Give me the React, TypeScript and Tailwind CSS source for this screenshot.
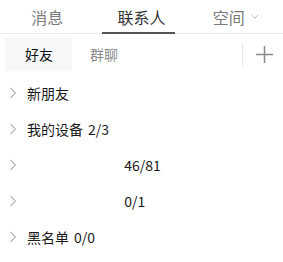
import React from 'react';

const ROWS = [
  { name: '新朋友', count: '' },
  { name: '我的设备', count: '2/3' },
  { name: '', count: '46/81' },
  { name: '', count: '0/1' },
  { name: '黑名单', count: '0/0' },
];

function Chevron({ className }: { className?: string }) {
  return (
    <svg viewBox="0 0 8 12" className={className} fill="none" stroke="currentColor" strokeWidth="1.1">
      <path d="M1.5 1l5 5-5 5" />
    </svg>
  );
}

export default function App() {
  return (
    <div
      className="w-[283px] h-[262px] bg-white overflow-hidden text-[#1a1a1a]"
      style={{ fontFamily: '"Noto Sans CJK SC", "Noto Sans", sans-serif' }}
    >
      {/* top tabs */}
      <div className="grid grid-cols-3 h-[34px] border-b border-[#ececec]">
        <div className="flex items-center justify-center text-[16px] text-[#7a7a7a]">消息</div>
        <div className="relative flex items-center justify-center text-[16px] text-[#333]">
          联系人
          <div className="absolute left-[8px] right-[14px] bottom-[-1px] h-[2px] bg-[#555]" />
        </div>
        <div className="flex items-center justify-center gap-[6px] text-[16px] text-[#7a7a7a]">
          空间
          <svg viewBox="0 0 10 6" className="w-[8px] h-[5px] text-[#aaa]" fill="none" stroke="currentColor" strokeWidth="1">
            <path d="M1 1l4 4 4-4" />
          </svg>
        </div>
      </div>

      {/* sub tabs */}
      <div className="flex items-center h-[37px] pt-[4px] pl-[5px] pr-[10px]">
        <div className="w-[67px] h-[33px] bg-[#f7f7f7] flex items-center pl-[20px] text-[14px] text-[#111]">好友</div>
        <div className="ml-[18px] text-[14px] text-[#8a8a8a]">群聊</div>
        <div className="ml-auto w-px h-[22px] bg-[#e6e6e6]" />
        <svg viewBox="0 0 16 16" className="ml-[13px] w-[17px] h-[17px] text-[#888]" fill="none" stroke="currentColor" strokeWidth="1.4">
          <path d="M8 0v16M0 8h16" />
        </svg>
      </div>

      {/* list */}
      <div className="flex flex-col pt-[4px]">
        {ROWS.map((row, i) => (
          <div key={i} className="flex items-center h-[36px] pl-[9px] text-[14px]">
            <Chevron className="w-[8px] h-[12px] text-[#b5b5b5]" />
            <span className="ml-[10px] whitespace-pre">{row.name || ' '}</span>
            {row.count && (
              <span className={row.name ? 'ml-[5px]' : 'ml-[94px]'}>{row.count}</span>
            )}
          </div>
        ))}
      </div>
    </div>
  );
}
